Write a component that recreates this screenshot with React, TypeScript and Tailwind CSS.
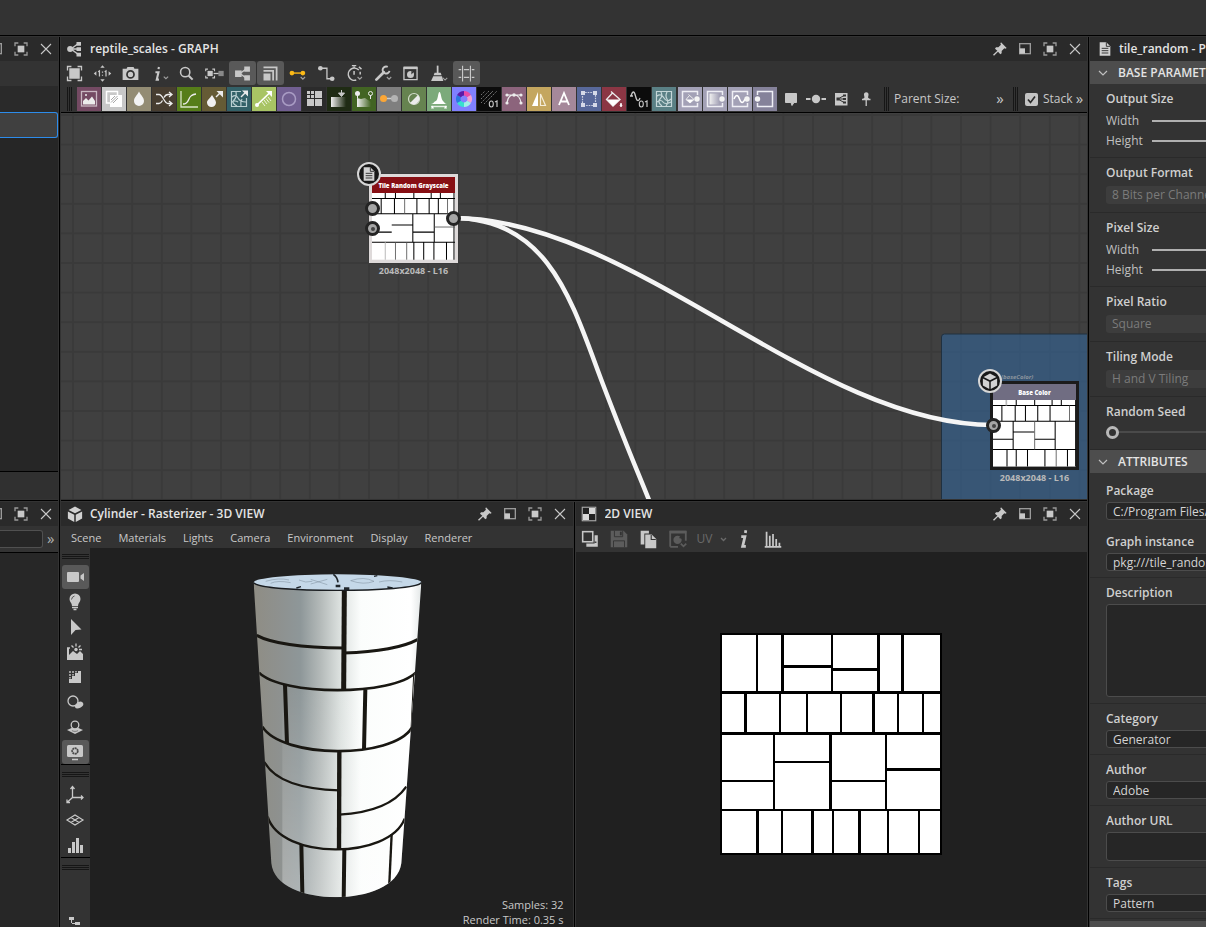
import React, { useId } from "react";

type Kids = { children?: React.ReactNode };

/* ---------- icon primitives ---------- */

function Ico({ children, size = 24 }: Kids & { size?: number }) {
  return (
    <svg width={size} height={size} viewBox="0 0 24 24" fill="none" stroke="#c8c8c8" strokeWidth="1.5" aria-hidden="true" className="shrink-0">
      {children}
    </svg>
  );
}
const S = "#c8c8c8";
const chev = <path d="M18 15.5l2.5 2.5 2.5-2.5" strokeWidth="1.3" stroke="#a0a0a0" />;

/* ---------- main toolbar icons ---------- */

const toolbar: { name: string; icon: React.ReactNode; on?: boolean }[] = [
  { name: "Fit view", icon: <><rect x="6" y="6" width="12" height="12" fill={S} stroke="none" /><path d="M4 8.500V4h4.500M15.500 4H20v4.500M20 15.500V20h-4.500M8.500 20H4v-4.500" /></> },
  { name: "Zoom 1:1", icon: <><path d="M9.500 5.500L12 2.500l2.500 3zM9.500 18.500l2.500 3 2.500-3zM5 9.500L2 12l3 2.500zM19 9.500l3 2.500-3 2.500z" fill={S} stroke="none" /><path d="M7 10l1.500-1v6.500M14.500 10L16 9v6.500" strokeWidth="1.400" /><path d="M11.300 10.500h1.400M11.300 14h1.400" strokeWidth="1.400" /></> },
  { name: "Screenshot", icon: <><path d="M3 6.500h4.500l1-2h7l1 2H21v13H3z" fill={S} stroke="none" /><circle cx="12" cy="13" r="4" fill={S} stroke="#333" strokeWidth="2" /></> },
  { name: "Info", icon: <><path d="M12.500 4.500L12 7M8.500 10.500h3.500l-2 8.500h2.500" strokeWidth="2.400" />{chev}</> },
  { name: "Search", icon: <><circle cx="10.500" cy="10.500" r="5.300" strokeWidth="1.800" /><path d="M14.500 14.500l4.500 4.500" strokeWidth="2.400" /></> },
  { name: "Node focus", icon: <><rect x="4" y="9" width="6" height="6" fill={S} stroke="none" /><path d="M2 9.500V7h2.500M9.500 7H12v2.500M12 14.500V17H9.500M4.500 17H2v-2.500" strokeWidth="1.300" /><path d="M11 12h6" /><rect x="16.500" y="9" width="6" height="6" fill="#888" stroke="none" /></> },
  { name: "Link view", on: true, icon: <><path d="M9 12l7-5M9 12l7 5" /><rect x="3.500" y="8.500" width="7.500" height="7.500" fill={S} stroke="none" /><rect x="14" y="4" width="6.500" height="6" fill={S} stroke="none" /><rect x="14" y="14" width="6.500" height="6" fill={S} stroke="none" /></> },
  { name: "Stacked view", on: true, icon: <><path d="M4 5h15v15" strokeWidth="2" /><path d="M4 9h11v11" strokeWidth="2" /><rect x="4" y="12" width="8" height="8" fill={S} stroke="none" /></> },
  { name: "Link colour", icon: <><path d="M4 11.500h13" stroke="#fbb917" strokeWidth="1.600" /><circle cx="4.500" cy="11.500" r="2.700" fill="#fbb917" stroke="none" /><circle cx="17" cy="11.500" r="2.700" fill="#fbb917" stroke="none" /><path d="M14.500 16l2.500 2.500 2.500-2.500" strokeWidth="1.300" stroke="#a0a0a0" /></> },
  { name: "Link shape", icon: <><path d="M5 6h7.500v12H19" strokeWidth="1.500" /><circle cx="5" cy="6" r="2.700" fill={S} stroke="none" /><circle cx="18.500" cy="18" r="2.700" fill={S} stroke="none" /></> },
  { name: "Timings", icon: <><path d="M17 8a7 7 0 1 0-3 11.500M9 3h5M11.500 4v2M11.500 9v4.500M17 4.500l3 2.500M18.500 10v3" strokeWidth="1.700" /><path d="M15.500 16l2.500 2.500 2.500-2.500" strokeWidth="1.300" stroke="#a0a0a0" /></> },
  { name: "Tools", icon: <><path d="M5 19l8.500-8.500" strokeWidth="3.200" strokeLinecap="round" /><path d="M18 4.500a4 4 0 1 0 2 4.500" strokeWidth="2.200" /><path d="M17 16l2.500 2.500L22 16" strokeWidth="1.300" stroke="#a0a0a0" /></> },
  { name: "Preview", icon: <><path d="M4.500 5.500h15v13.500h-15z" /><path d="M4 5.500h16" strokeWidth="3" /><circle cx="12" cy="13" r="4" fill={S} stroke="none" /><path d="M13 9l3 1-3 3z" fill="#333" stroke="none" /></> },
  { name: "Clean", icon: <><path d="M11 3v9" strokeWidth="2" /><path d="M7.500 11h7l1 3h-9zM6 15h10l1.500 5.500h-14z" fill={S} stroke="none" /><path d="M17 17l2.500 2.500L22 17" strokeWidth="1.300" stroke="#a0a0a0" /></> },
  { name: "Snap to grid", on: true, icon: <path d="M7.500 3v18M16.500 3v18M3 7.500h3M9 7.500h6M18 7.500h3M3 16.500h3M9 16.500h6M18 16.500h3" strokeWidth="1.300" /> },
];

/* ---------- atomic node tiles ---------- */

const W = "#ececec";
const io = (x: number) => <circle cx={x} cy="12" r="2.700" fill="#f4f4f4" stroke="none" />;

const tiles: { name: string; bg: string; icon: React.ReactNode }[] = [
  { name: "Bitmap", bg: "bg-[#744a63]", icon: <><rect x="4.500" y="4.500" width="15" height="14.500" stroke="#c9b7c2" strokeWidth="1.300" /><path d="M6 17.500V14l3-3 2.500 2.500L15 9.500l3 4.500v3.500z" fill={W} stroke="none" /><circle cx="9" cy="8" r="1" fill={W} stroke="none" /></> },
  { name: "Blend", bg: "bg-[#c8c8c8]", icon: <><path d="M8 16H4.500V4.500h11V8" stroke="#fff" /><rect x="8" y="8" width="12" height="12" fill="#fff" stroke="none" /><path d="M9 13l4-4M9 15.500l6.500-6.500M11 16l5-5" stroke="#a8a8a8" strokeWidth="1" /></> },
  { name: "Blur", bg: "bg-[#938c74]", icon: <path d="M12 4.500c2 4 5 6 5 9.500a5 5 0 0 1-10 0c0-3.500 3-5.500 5-9.500z" fill="#f3f3f3" stroke="none" /> },
  { name: "Channel shuffle", bg: "bg-[#473d30]", icon: <path d="M4 7.500h3c4 0 5 9 9 9h3M4 16.500h3c1.500 0 2.500-1 3.500-3M12 10.500c1-2 2.500-3 4-3h3M17 5l3 2.500-3 2.500M17 14l3 2.500-3 2.500" stroke={W} strokeWidth="1.300" /> },
  { name: "Curve", bg: "bg-[#567d19]", icon: <><path d="M4 4v16h17" stroke="#d8e2c6" strokeWidth="1.300" /><path d="M6 17c8 0 3-9 13-10" stroke={W} strokeWidth="1.400" /></> },
  { name: "Directional blur", bg: "bg-[#655b35]", icon: <><path d="M10 8c1.500 3 4 5 4 7.500a4.500 4.500 0 0 1-9 0C5 13 8.500 11 10 8z" fill="#f0f0f0" stroke="none" /><path d="M14 10l5-5" stroke={W} strokeWidth="1.500" /><path d="M14.500 4H21v6.500z" fill={W} stroke="none" /></> },
  { name: "Directional warp", bg: "bg-[#336168]", icon: <><path d="M14 4.500H4.500v15h15V11M5 10q4-3 6 1t8 4M9 5q1 5-2 8t3 6M14 19q-1-4 1-7M5 15q3-2 6 0" stroke="#b9ced1" strokeWidth="1.200" /><path d="M14 10l5-5" stroke={W} strokeWidth="1.500" /><path d="M15 3.500h6v6z" fill={W} stroke="none" /></> },
  { name: "Distance", bg: "bg-[#a8c464]", icon: <><path d="M5 18L18 5.500" stroke="#fff" strokeWidth="1.700" /><path d="M14 4h6v6z" fill="#fff" stroke="none" /><circle cx="5" cy="18" r="2" fill="#fff" stroke="none" /><path d="M10 15l3 4M12 13l3 4M14 11.500l3 4M16 10l3 4" stroke="#eef4dc" strokeWidth="1" /></> },
  { name: "Dot", bg: "bg-[#715f91]", icon: <circle cx="12" cy="12" r="6.500" stroke="#a99cc4" strokeWidth="1.500" /> },
  { name: "FX-Map", bg: "bg-[#2b2b2b]", icon: <g fill={S} stroke="none"><path d="M5 4h3v3H5zM9 4h3v3H9zM5 8h3v3H5zM9 8h3v3H9zM13 4h7v7h-7zM5 12h7v7H5zM13 12h7v7h-7z" /></g> },
  { name: "Gradient", bg: "bg-[#1f2b14]", icon: <><rect x="4" y="10" width="15" height="10" fill="url(#fadeLight)" stroke="none" /><path d="M14.500 3v4M11.500 6l3 3.500 3-3.500z" fill={S} stroke={S} strokeWidth="1" /></> },
  { name: "Dynamic gradient", bg: "bg-[#426423]", icon: <><path d="M5 20V11l4 1 4-1 6 4v5z" fill="url(#fadeLight)" stroke="none" /><circle cx="5.500" cy="6.500" r="2.500" fill={W} stroke="none" /><path d="M5.500 7v4M18.500 8v4" stroke={W} strokeWidth="1" /><circle cx="18.500" cy="6.500" r="2" stroke={W} strokeWidth="1" /></> },
  { name: "Grayscale conversion", bg: "bg-[#7f7f7f]", icon: <><path d="M7 11.500h10" stroke="#ccc" /><circle cx="6.500" cy="11.500" r="3.500" fill="#fba636" stroke="none" /><circle cx="17.500" cy="11.500" r="3.500" fill="#b4b4b4" stroke="none" /></> },
  { name: "HSL", bg: "bg-[#668350]", icon: <><circle cx="12" cy="12" r="5.500" stroke="#d3dccb" strokeWidth="1.200" /><path d="M16 8a5.700 5.700 0 0 1-8 8z" fill={W} stroke="none" /></> },
  { name: "Levels", bg: "bg-[#7caa7b]", icon: <><path d="M4 17c3 0 3-3 5-3 2-1 2-9 3.500-9S14 12 16 14s2 3 4 3z" fill="#fff" stroke="none" /><path d="M4 19.500h16" stroke="#e6f0e6" strokeWidth="1.400" /><path d="M5.500 18.500l-1.500 3h3zM18.500 18.500l-1.500 3h3z" fill="#fff" stroke="none" /></> },
  { name: "Normal", bg: "bg-[#8080ff]", icon: <g strokeWidth="4.500"><path d="M12 6.200A5.800 5.800 0 0 1 17 9.100" stroke="#e84aa8" /><path d="M17 9.100a5.800 5.800 0 0 1 0 5.800" stroke="#f2a2d4" /><path d="M17 14.900a5.800 5.800 0 0 1-5 2.900" stroke="#9ff0e6" /><path d="M12 17.800a5.800 5.800 0 0 1-5-2.900" stroke="#35e0cf" /><path d="M7 14.900a5.800 5.800 0 0 1 0-5.800" stroke="#2a78e0" /><path d="M7 9.100a5.800 5.800 0 0 1 5-2.900" stroke="#5a1aa8" /></g> },
  { name: "Pixel processor", bg: "bg-[#0c0c0c]", icon: <><path d="M4 8l4-4M4 12l8-8M4 16L16 4M7 17L20 4M9 11l7-7" stroke="#777" strokeWidth="1" strokeDasharray="1.500 1" /><ellipse cx="14.300" cy="17" rx="2" ry="3" strokeWidth="1.100" /><path d="M18 15l2-1v6" strokeWidth="1.200" /></> },
  { name: "Vector graphic", bg: "bg-[#8c647c]", icon: <><path d="M5 16q1-8 7-8t7 8M5 8h14" stroke={W} strokeWidth="1.200" /><g fill={W} stroke="none"><circle cx="5" cy="8" r="1.600" /><circle cx="12" cy="8" r="1.800" /><circle cx="19" cy="8" r="1.600" /><circle cx="5" cy="16" r="1.600" /><circle cx="19" cy="16" r="1.600" /></g></> },
  { name: "Mirror", bg: "bg-[#c4a65f]", icon: <><path d="M11 5v14H5z" fill="#fff" stroke="none" /><path d="M13.500 7v11.500h5z" stroke="#f4ecd8" strokeWidth="1.200" /></> },
  { name: "Text", bg: "bg-[#a5889a]", icon: <path d="M7 18L12 6l5 12M9 14.500h6" stroke="#fff" strokeWidth="1.800" /> },
  { name: "Transform 2D", bg: "bg-[#58689a]", icon: <><rect x="5.500" y="5.500" width="13" height="13" stroke="#cbd0e2" strokeWidth="1.200" strokeDasharray="1.600 1" /><path d="M4 4h4v4H4zM16 4h4v4h-4zM4 16h4v4H4zM16 16h4v4h-4z" fill="#d5d9e8" stroke="none" /></> },
  { name: "Uniform color", bg: "bg-[#8b3644]", icon: <><path d="M9 4.500l9 8-7 6.500-6.500-6.500 6-6.500" stroke={W} strokeWidth="1.300" /><path d="M5 12.500h13L11 19z" fill="#fff" stroke="none" /><path d="M19 16l1 3a1.300 1.300 0 0 1-2 0z" fill="#fff" stroke="#fff" strokeWidth=".8" /></> },
  { name: "Value processor", bg: "bg-[#0c0c0c]", icon: <><path d="M3 9h3M4 9q2.500-8 4.500 0t4.500 2" strokeWidth="1.300" /><ellipse cx="14.300" cy="17" rx="2" ry="3" strokeWidth="1.100" /><path d="M18 15l2-1v6" strokeWidth="1.200" /></> },
  { name: "Warp", bg: "bg-[#5a8085]", icon: <path d="M4.500 4.500h15v15h-15zM5 9q4-3 7 2t7 1M9 5q2 4-1 7t2 7M15 5q-2 4 0 7t-1 7M5 15q4-3 6 0t8 0" stroke="#c4d6d8" strokeWidth="1.200" /> },
];

const ioTiles: { name: string; bg: string; icon: React.ReactNode }[] = [
  { name: "Input color", bg: "bg-[#a3a1b6]", icon: <><path d="M19.500 8V4.500h-15v15h15V16" stroke="#efeff5" /><path d="M10.500 7.500l5.500 5-4 3.500-4-3.500 3.500-4" stroke={W} strokeWidth="1" /><path d="M8 12.500h8L12 16z" fill="#fff" stroke="none" />{io(19)}</> },
  { name: "Input grayscale", bg: "bg-[#a3a1b6]", icon: <><path d="M19.500 8V4.500h-15v15h15V16" stroke="#efeff5" /><rect x="6.500" y="6.500" width="10" height="11" fill="url(#fadeLight)" stroke="none" />{io(19)}</> },
  { name: "Input value", bg: "bg-[#a3a1b6]", icon: <><path d="M19.500 8V4.500h-15v15h15V16" stroke="#efeff5" /><path d="M6 12q3-7 5.500 0t5.500 0" stroke="#fff" />{io(19)}</> },
  { name: "Output", bg: "bg-[#85829a]", icon: <><path d="M4.500 8V4.500h15v15h-15V16" stroke="#efeff5" />{io(4.5)}</> },
];

const extras = [
  { name: "Comment", icon: <path d="M6.500 6.500h11v9H15l-2 3-1-3H6.500z" fill={S} stroke={S} strokeLinejoin="round" strokeWidth="1" /> },
  { name: "Dot node", icon: <><circle cx="12" cy="12" r="4.200" fill={S} stroke="none" /><path d="M2 12h4.500M17.500 12H22" strokeWidth="1.800" /></> },
  { name: "Frame", icon: <><rect x="6" y="6" width="12.500" height="12.500" fill={S} stroke="none" /><path d="M9 12l6-3.500M9 12h6M9 12l6 3.500" stroke="#333" strokeWidth="1" /><path d="M7.500 10.500h3v3h-3zM14 7.500h3V9.500h-3zM14 11h3v2h-3zM14 14.500h3v2h-3z" fill="#333" stroke="none" /></> },
  { name: "Pin", icon: <><path d="M10 8a2.300 2.300 0 1 1 4.500 0l-.5 2.500 2 2H8.500l2-2z" fill={S} stroke="none" /><path d="M8 12.500h8.500M12.200 12v7" strokeWidth="1.300" /></> },
];

function TileButton({ name, bg, icon }: { name: string; bg?: string; icon: React.ReactNode }) {
  return (
    <button type="button" aria-label={name} title={name} className={`flex h-6 w-6 shrink-0 items-center justify-center ${bg ?? ""}`}>
      <Ico>{icon}</Ico>
    </button>
  );
}

/* ---------- panel chrome ---------- */

const PinIcon = <Ico size={16}><path d="M13.500 2l8.500 8.500-2 1-1.500-.5-4 4v3.500l-2 1.500-3.500-4L3 22l-1.500-1.500L8 14.500 4.500 11.500 6 9.500h3.500l4-4L12.500 4z" fill={S} stroke="none" /></Ico>;
const DockIcon = <Ico size={16}><rect x="4" y="4" width="16" height="15" strokeWidth="2" stroke="#9a9a9a" /><rect x="4" y="11" width="8" height="8" fill={S} stroke="none" /></Ico>;
const MaxIcon = <Ico size={16}><rect x="7" y="7" width="10" height="10" fill={S} stroke="none" /><path d="M3 8V3h5M16 3h5v5M21 16v5h-5M8 21H3v-5" strokeWidth="2" stroke="#999" /></Ico>;
const CloseIcon = <Ico size={16}><path d="M4.500 4.500l15 15M19.500 4.500l-15 15" strokeWidth="1.600" /></Ico>;

function TitleBar({ title, icon, pin = true, dock = true }: { title?: string; icon?: React.ReactNode; pin?: boolean; dock?: boolean }) {
  const btn = "flex h-6 w-[25px] shrink-0 items-center justify-center";
  return (
    <header className="flex h-6 shrink-0 items-center justify-end overflow-hidden bg-[#2a2a2a]">
      {icon && <span className="mr-0.5 flex w-[27px] shrink-0 items-center justify-center">{icon}</span>}
      {title && <h2 className="flex-1 truncate text-[12px] font-semibold text-[#e4e4e4]">{title}</h2>}
      {pin && <button type="button" aria-label="Pin" className={btn}>{PinIcon}</button>}
      {dock && <button type="button" aria-label="Float" className={btn}>{DockIcon}</button>}
      <button type="button" aria-label="Maximize" className={btn}>{MaxIcon}</button>
      <button type="button" aria-label="Close" className={btn}>{CloseIcon}</button>
    </header>
  );
}

function Grip() {
  return (
    <span aria-hidden="true" className="flex h-6 w-[5px] shrink-0 justify-between">
      <i className="w-px bg-[#161616]" /><i className="w-px bg-[#161616]" /><i className="w-px bg-[#161616]" />
    </span>
  );
}
function HGrip() {
  return (
    <span aria-hidden="true" className="flex h-[17px] w-[27px] shrink-0 flex-col justify-center gap-px">
      <i className="h-px bg-[#161616]" /><i className="h-px bg-[#161616]" /><i className="h-px bg-[#161616]" />
    </span>
  );
}
const HDivider = () => <div className="flex h-[3px] shrink-0 flex-col justify-center bg-[#333]"><div className="h-px bg-black" /></div>;
const VDivider = () => <div className="flex w-[3px] shrink-0 justify-center bg-[#333]"><div className="w-px bg-black" /></div>;

/* ---------- drawings ---------- */

const GraphGlyph = <Ico size={18}><path d="M8 11l8-6M8 12h8M8 13l8 6" strokeWidth="2" /><circle cx="5.500" cy="12" r="4" fill={S} stroke="none" /><path d="M14 2.500h6v5h-6zM14 9.500h6v5h-6zM14 17h6v5h-6z" fill={S} stroke="none" /></Ico>;
const CubeGlyph = <Ico size={18}><path d="M12 2l8.500 4.500L12 11 3.500 6.500zM2.500 8.500l8.500 4.500v9.500L2.500 18zM21.500 8.500L13 13v9.500l8.500-4.500z" fill="#d2d2d2" stroke="none" /></Ico>;
const DocGlyph = <Ico size={16}><path d="M4 2h10l6 6v14H4z" fill="#d2d2d2" stroke="none" /><path d="M14 2v6h6M7 11h10M7 14.500h10M7 18h10" stroke="#222" strokeWidth="1.300" /></Ico>;
const CheckerGlyph = <Ico size={18}><rect x="3" y="3" width="18" height="18" stroke="#a8a8a8" /><path d="M4 4h8v8H4zM12 12h8v8h-8z" fill="#222" stroke="none" /><path d="M12 4h8v8h-8zM4 12h8v8H4z" fill="#d8d8d8" stroke="none" /></Ico>;

function NodeTexture({ variant }: { variant: "a" | "b" }) {
  return variant === "a" ? (
    <svg viewBox="68 117 244 196" className="block w-full" preserveAspectRatio="none" aria-hidden="true">
      <rect x="68" y="117" width="244" height="196" fill="#fff" />
      <path d="M68 133h244M68 178h244M68 262h244M107 117v16M137 117v16M191 117v16M242 117v16M269 117v16M95 133v45M134 133v45M200 133v45M236 133v45M263 133v45M188 178v84M251 178v84M126 211h62M68 232h58M188 232h63M191 262v51M220 262v51M250 262v51M287 262v51M309 117v196" stroke="#000" strokeWidth="3" />
      <path d="M164 133v45M290 133v45M251 217h61M137 262v51M170 262v51" stroke="#555" strokeWidth="2.500" />
      <path d="M107 262v51" stroke="#bbb" strokeWidth="3" />
    </svg>
  ) : (
    <svg viewBox="192 228 243 195" className="block w-full" preserveAspectRatio="none" aria-hidden="true">
      <rect x="192" y="228" width="243" height="195" fill="#fff" />
      <path d="M192 244h243M192 290h243M192 373h243M260 228v16M314 228v16M365 228v16M392 228v16M218 244v46M257 244v46M287 244v46M323 244v46M359 244v46M251 290v83M374 290v83M192 343h59M251 322h62M314 343h60M233 373v50M260 373v50M293 373v50M344 373v50M410 373v50M434 228v195" stroke="#000" strokeWidth="3" />
      <path d="M416 244v46M314 290v83M377 373v50" stroke="#555" strokeWidth="2.500" />
      <path d="M231 228v16" stroke="#bbb" strokeWidth="5" />
    </svg>
  );
}

function BrickMap() {
  return (
    <svg width="222" height="222" viewBox="30 24 666 666" role="img" aria-label="Tile pattern" shapeRendering="crispEdges">
      <rect x="30" y="24" width="666" height="666" fill="#000" />
      <g fill="#fff">
        <path d="M36 30h102v168H36zM144 30h69v168h-69zM222 30h141v90H222zM222 129h141v69H222zM369 30h132v99H369zM369 138h132v60H369zM510 30h63v168h-63zM582 30h108v168H582z" />
        <path d="M36 207h66v114H36zM111 207h96v114h-96zM213 207h75v114h-75zM294 207h96v114h-96zM396 207h90v114h-90zM495 207h66v114h-66zM567 207h69v114h-69zM642 207h48v114h-48z" />
        <path d="M36 330h153v135H36zM36 471h153v81H36zM195 330h162v78H195zM195 414h162v138H195zM366 330h159v135H366zM366 471h159v81H366zM531 330h159v99H531zM531 438h159v114H531z" />
        <path d="M36 558h102v126H36zM147 558h66v126h-66zM219 558h84v126h-84zM312 558h54v126h-54zM372 558h72v126h-72zM453 558h78v126h-78zM537 558h87v126h-87zM630 558h60v126h-60z" />
      </g>
    </svg>
  );
}

function Cylinder() {
  return (
    <svg width="200" height="350" viewBox="0 0 600 1050" role="img" aria-label="Tiled cylinder" className="shrink-0">
      <defs>
        <linearGradient id="shade" x1="44" x2="546" y1="0" y2="0" gradientUnits="userSpaceOnUse">
          <stop offset="0" stopColor="#8f8d84" /><stop offset=".15" stopColor="#8e918f" /><stop offset=".28" stopColor="#8e9799" />
          <stop offset=".4" stopColor="#b4bab9" /><stop offset=".52" stopColor="#dde2e0" /><stop offset=".64" stopColor="#fbfdfc" /><stop offset=".94" stopColor="#fff" /><stop offset="1" stopColor="#e4e8e8" />
        </linearGradient>
        <linearGradient id="lower" x1="0" x2="0" y1="90" y2="1010" gradientUnits="userSpaceOnUse">
          <stop offset=".3" stopColor="#fff" stopOpacity="0" /><stop offset="1" stopColor="#fff" stopOpacity=".28" />
        </linearGradient>
        <clipPath id="body"><path d="M44 68C90 98 500 98 547 68L487 910C470 1046 110 1046 97 910z" /></clipPath>
      </defs>
      <g clipPath="url(#body)">
        <rect x="40" y="40" width="510" height="990" fill="url(#shade)" />
        <rect x="130" y="40" width="420" height="990" fill="url(#lower)" />
        <g stroke="#191712" fill="none" strokeWidth="8">
          <path d="M53 226Q120 262 314 264M314 279Q470 274 537 238" strokeWidth="9" />
          <path d="M60 338C130 408 460 408 530 338" />
          <path d="M70 500C130 597 460 597 518 504" />
          <path d="M76 606Q120 686 300 691M300 764Q450 756 502 680" strokeWidth="7" />
          <path d="M86 770C125 900 450 900 497 776" strokeWidth="7" />
          <path d="M316 90L314 390" strokeWidth="15" />
          <path d="M138 374L144 552M379 388L375 570" strokeWidth="12" />
          <path d="M301 574L300 868" strokeWidth="13" />
          <path d="M187 852L190 1000M316 868L314 1020" strokeWidth="12" />
          <path d="M458 822L451 970" strokeWidth="7" />
          <path d="M524 345L516 510" strokeWidth="3" />
        </g>
      </g>
      <ellipse cx="295.500" cy="67" rx="251.500" ry="24" fill="#c5d8e8" />
      <path d="M44 68C60 99 530 99 547 68" fill="none" stroke="#1a1d20" strokeWidth="4" />
      <g stroke="#20262b" fill="none">
        <path d="M283 43q12 8 14 24" strokeWidth="5" /><path d="M290 78h14M315 86h16" strokeWidth="8" />
        <path d="M172 84l14-4M405 49l10-2M445 81l16 3" strokeWidth="4" />
        <path d="M80 64q40-12 70-4M95 70q20-10 60-2M215 58l50 16M265 58l-50 14M335 62q40-14 70 2q-30 12-70-2M420 66q30-8 70 0M180 60q20 10 40 4" strokeWidth="1.500" stroke="#7b8b98" />
      </g>
    </svg>
  );
}

/* ---------- graph panel ---------- */

function Port({ hollow = false, className }: { hollow?: boolean; className: string }) {
  return (
    <span className={`absolute flex h-[15px] w-[15px] items-center justify-center rounded-full border-[3px] border-[#242424] bg-[#a6a6a6] ${className}`}>
      {hollow && <i className="h-1 w-1 rounded-full bg-[#444]" />}
    </span>
  );
}

function GraphNode({ title, variant, className, frame, head, children, badge }: Kids & { title: string; variant: "a" | "b"; className: string; frame: string; head: string; badge: React.ReactNode }) {
  return (
    <article className={`absolute w-[89px] ${className}`}>
      <div className={`p-[3px] ${frame}`}>
        <h3 className={`flex h-4 items-center justify-center pt-0.5 text-[6px] font-extrabold whitespace-nowrap text-white ${head}`}>{title}</h3>
        <NodeTexture variant={variant} />
      </div>
      <p className="text-center text-[9px] leading-[15px] font-bold whitespace-nowrap text-[#b9b9b9]">2048x2048 - L16</p>
      <span className="absolute -top-3 -left-3 flex h-6 w-6 items-center justify-center rounded-full border-2 border-[#d6d6d6] bg-[#181818]">{badge}</span>
      {children}
    </article>
  );
}

function GraphCanvas() {
  return (
    <div className="relative min-h-0 flex-1 overflow-hidden bg-[#404040]">
      <svg className="absolute inset-0 h-full w-full" aria-hidden="true">
        <defs>
          <pattern id="grid" x="11" y="1" width="29.600" height="29.600" patternUnits="userSpaceOnUse">
            <path d="M1 0v29.600M0 1h29.600" stroke="#3a3a3a" strokeWidth="2" />
          </pattern>
          <linearGradient id="fadeLight"><stop offset="0" stopColor="#f0f0f0" /><stop offset="1" stopColor="#f0f0f0" stopOpacity="0" /></linearGradient>
        </defs>
        <rect width="100%" height="100%" fill="url(#grid)" />
        <rect x="880.500" y="221" width="160" height="180" rx="3" fill="#33659a" fillOpacity=".6" stroke="#20303f" />
        <g fill="none" stroke="#f5f5f5" strokeWidth="4.500">
          <path d="M392 105C572 105 752 312 932 312" />
          <path d="M392 105C490 105 512 193 543 274S573 349 590 392" />
        </g>
      </svg>
      <GraphNode title="Tile Random Grayscale" variant="a" className="top-[61px] left-[308px]" frame="bg-[#dedada]" head="bg-[#870f14]" badge={DocGlyph}>
        <Port className="top-[27px] -left-1" />
        <Port hollow className="top-[47px] -left-1" />
        <Port className="top-[37px] left-[77px]" />
      </GraphNode>
      <p className="absolute top-[260px] left-[940px] text-[6px] leading-[9px] font-bold text-[#8b949d] italic">(baseColor)</p>
      <GraphNode title="Base Color" variant="b" className="top-[268px] left-[929px]" frame="bg-[#1b1b1b]" head="bg-[#706d82]" badge={CubeGlyph}>
        <Port hollow className="top-[37px] -left-1" />
      </GraphNode>
    </div>
  );
}

function GraphPanel() {
  const stack = useId();
  return (
    <section className="flex min-h-0 flex-[462] flex-col bg-[#333]">
      <TitleBar title="reptile_scales - GRAPH" icon={GraphGlyph} />
      <div className="flex h-6 shrink-0 items-center gap-px">
        {toolbar.map((t) => (
          <button key={t.name} type="button" aria-label={t.name} title={t.name} className={`flex h-6 w-[27px] shrink-0 items-center justify-center rounded-[3px] ${t.on ? "bg-[#595959]" : ""}`}>
            <Ico size={21}>{t.icon}</Ico>
          </button>
        ))}
      </div>
      <div className="flex h-7 shrink-0 items-end overflow-hidden border-b border-black pb-px pl-1.5 text-[12px] text-[#c8c8c8]">
        <Grip />
        <div className="flex gap-px pl-[5px]">{tiles.map((t) => <TileButton key={t.name} {...t} />)}</div>
        <div className="flex gap-px pl-0.5">{ioTiles.map((t) => <TileButton key={t.name} {...t} />)}</div>
        <div className="flex gap-px pr-1.5 pl-0.5">{extras.map((t) => <TileButton key={t.name} {...t} />)}</div>
        <Grip />
        <span className="flex-1 pl-[5px] leading-6 whitespace-nowrap">Parent Size:</span>
        <button type="button" aria-label="More parent size options" className="h-6 w-[18px] pb-0.5 text-[15px] leading-none">»</button>
        <span className="w-1" />
        <Grip />
        <label htmlFor={stack} className="flex h-6 items-center gap-[5px] pl-[7px]">
          <span className="grid h-[13px] w-[13px]">
            <input id={stack} type="checkbox" defaultChecked className="col-start-1 row-start-1 h-[13px] w-[13px] appearance-none rounded-[2px] bg-[#c4c4c4]" />
            <svg viewBox="0 0 13 13" className="pointer-events-none col-start-1 row-start-1" aria-hidden="true"><path d="M3 6.500l2.500 3L10 3.500" fill="none" stroke="#2a2a2a" strokeWidth="1.700" /></svg>
          </span>
          <span className="w-[29px]">Stack</span>
        </label>
        <button type="button" aria-label="More stack options" className="h-6 w-[15px] pb-0.5 text-[15px] leading-none">»</button>
      </div>
      <GraphCanvas />
    </section>
  );
}

/* ---------- 3D view ---------- */

const viewTools: { name: string; icon: React.ReactNode; on?: boolean }[] = [
  { name: "Camera", on: true, icon: <path d="M4 8q0-1 1-1h10q1 0 1 1v8q0 1-1 1H5q-1 0-1-1zM17.500 10.500L21 8v8l-3.500-2.500z" fill={S} stroke="none" /> },
  { name: "Light", icon: <><path d="M12 3.500a5.500 5.500 0 0 1 5.500 5.500c0 3-2.500 4-2.500 7H9c0-3-2.500-4-2.500-7A5.500 5.500 0 0 1 12 3.500z" fill={S} stroke="none" /><path d="M9 17.500h6M10.500 19.500h3" strokeWidth="1.300" /><path d="M8.500 9.500Q9 6.500 11.500 6" stroke="#555" strokeWidth="1" /></> },
  { name: "Select", icon: <path d="M8 4l10.500 10.500-6 .5L8 20z" fill={S} stroke="none" /> },
  { name: "Environment", icon: <><path d="M4 8v12h16v-6l-3-3-3 3-4-3-4 4V8z" fill={S} stroke="none" /><path d="M13 3.500v3M8.500 5.500l2 2M17.500 5.500l-2 2M19 9.500h-3" strokeWidth="1.300" /><circle cx="13" cy="9.500" r="1.700" fill={S} stroke="none" /><path d="M4 8h3" /></> },
  { name: "Shading", icon: <><path d="M6 18v-4h3v-3h3V8h3V6h3v12z" fill={S} stroke="none" /><path d="M6 6h2v2H6zM9 6h2v2H9zM12 6h2v1.500h-2zM6 9h2v2H6zM9 9h2v1.500H9zM6 12h2v1.500H6z" fill="#9a9a9a" stroke="none" /></> },
  { name: "Shadows", icon: <><ellipse cx="16" cy="15" rx="4.500" ry="3" fill={S} stroke="none" transform="rotate(-25 16 15)" /><circle cx="10" cy="11" r="5" fill="#333" strokeWidth="1.300" /></> },
  { name: "Ground plane", icon: <><path d="M4 15l8-3.500 8 3.500-8 4z" fill={S} stroke="none" /><circle cx="12" cy="10" r="3.800" fill="#333" strokeWidth="1.300" /><path d="M9 15.500q3 2 6 0" stroke="#888" /></> },
  { name: "Display settings", on: true, icon: <><rect x="4" y="5" width="16" height="12" rx="1.500" fill={S} stroke="none" /><circle cx="12" cy="11" r="2.800" stroke="#4a4a4a" strokeWidth="1.800" strokeDasharray="2 .5" /><path d="M9 19.500h6" strokeWidth="1.500" /></> },
];
const gizmoTools = [
  { name: "Axes", icon: <path d="M9.500 4v10.500H20M9.500 14.500L4 19.500M7.500 6l2-2.500 2 2.500M18 12.500l2 2-2 2M4 16.500v3h3" strokeWidth="1.300" /> },
  { name: "Grid", icon: <path d="M4 12l8-5 8 5-8 5zM8 9.500l8 5M16 9.500l-8 5" strokeWidth="1.200" /> },
  { name: "Statistics", icon: <path d="M5 20v-5h3v5zM9 20V9h3v11zM13 20V5h3v15zM17 20v-8h3v8z" fill={S} stroke="none" /> },
];

function SideButton({ name, icon, on }: { name: string; icon: React.ReactNode; on?: boolean }) {
  return (
    <button type="button" aria-label={name} title={name} className={`flex h-6 w-[27px] shrink-0 items-center pl-px ${on ? "rounded-[3px] bg-[#595959]" : ""}`}>
      <Ico size={24}>{icon}</Ico>
    </button>
  );
}

function View3D() {
  return (
    <section className="flex min-h-0 min-w-0 flex-1 flex-col bg-[#333]">
      <TitleBar title="Cylinder - Rasterizer - 3D VIEW" icon={CubeGlyph} />
      <nav className="flex h-[22px] shrink-0 items-center gap-[17px] pt-0.5 pl-2.5 text-[11px] text-[#c8c8c8]">
        {["Scene", "Materials", "Lights", "Camera", "Environment", "Display", "Renderer"].map((m) => (
          <button key={m} type="button">{m}</button>
        ))}
      </nav>
      <div className="flex min-h-0 flex-1">
        <div className="flex w-[29px] shrink-0 flex-col overflow-hidden">
          <div className="flex flex-col items-center border-b border-black">
            <HGrip />
            <div className="flex flex-col gap-px">{viewTools.map((t) => <SideButton key={t.name} {...t} />)}</div>
          </div>
          <div className="flex flex-col items-center border-b border-black pt-px">
            <HGrip />
            <div className="flex flex-col gap-px">{gizmoTools.map((t) => <SideButton key={t.name} {...t} />)}</div>
          </div>
          <div className="flex flex-col items-center gap-9 pt-px">
            <HGrip />
            <SideButton name="Hierarchy" icon={<path d="M6 5h5v3H6zM12 10h5v3h-5zM12 15h5v3h-5zM8 8h1v9h3v-1H9v-4h3v-1H8z" fill={S} stroke="none" />} />
          </div>
        </div>
        <div className="relative flex flex-1 items-center justify-center overflow-hidden bg-[#202020] pb-1.5 pl-4">
          <Cylinder />
          <p className="absolute right-[9px] bottom-0 text-right text-[11px] leading-[15px] text-[#c8c8c8]">Samples: 32<br />Render Time: 0.35 s</p>
        </div>
      </div>
    </section>
  );
}

/* ---------- 2D view ---------- */

function View2D() {
  const b = "flex h-6 w-6 items-center justify-center";
  return (
    <section className="flex min-h-0 min-w-0 flex-1 flex-col bg-[#333]">
      <TitleBar title="2D VIEW" icon={CheckerGlyph} />
      <div className="flex h-[26px] shrink-0 items-center gap-[5px] pl-0.5 text-[12px] text-[#6a6a6a]">
        <button type="button" aria-label="Background" className={b}><Ico size={22}><rect x="4" y="4" width="11" height="11" strokeWidth="1.700" /><path d="M17 8h3.500v12.500H8V17h9z" fill={S} stroke="none" /><path d="M17 15.500h2" stroke="#333" /></Ico></button>
        <button type="button" aria-label="Save" className={b}><Ico size={22}><path d="M3 3h14l4 4v14H3z" fill="#5c5c5c" stroke="none" /><path d="M7 3v6.500h9V3M6 21v-7h12v7" stroke="#333" strokeWidth="1" /><path d="M13 4h2v4h-2z" fill="#333" stroke="none" /></Ico></button>
        <button type="button" aria-label="Copy" className={b}><Ico size={22}><path d="M4 3h9v3H8v12H4z" fill={S} stroke="none" /><path d="M9 7h7l5 5v10H9z" fill={S} stroke="none" /><path d="M15.500 7.500v5h5" stroke="#333" strokeWidth="1.200" /></Ico></button>
        <button type="button" aria-label="Preview channel" className={`${b} ml-px`}><Ico size={22}><path d="M3.500 20.500V4h17v10M3.500 20.500H12" stroke="#5c5c5c" strokeWidth="2" /><path d="M3 4.500h18" stroke="#5c5c5c" strokeWidth="3" /><circle cx="11.500" cy="13" r="4.500" fill="#5c5c5c" stroke="none" /><path d="M13 11l3-3 1 4z" fill="#333" stroke="none" /><path d="M15 17l3 3 3-3" stroke="#5c5c5c" strokeWidth="1.800" /></Ico></button>
        <button type="button" className="flex items-center gap-2 pl-0.5">UV<svg width="7" height="5" viewBox="0 0 7 5" aria-hidden="true"><path d="M1 1l2.500 2.500L6 1" fill="none" stroke="#6a6a6a" strokeWidth="1.300" /></svg></button>
        <button type="button" aria-label="Info" className={b}><Ico size={22}><path d="M14 2.500L13.500 5.500M9 9.500h4l-2.500 10.500h3.500" strokeWidth="3" /></Ico></button>
        <button type="button" aria-label="Histogram" className={b}><Ico size={22}><path d="M3 20.500h18M5 20V4M8.500 20V8.500M12 20V6.500M15.500 20v-8M19 20v-4" strokeWidth="1.900" /></Ico></button>
      </div>
      <div className="flex min-h-0 flex-1 items-center justify-center overflow-hidden bg-[#202020] pt-2">
        <BrickMap />
      </div>
    </section>
  );
}

/* ---------- left column ---------- */

function LeftColumn() {
  return (
    <aside className="flex w-[58px] shrink-0 flex-col bg-[#333]">
      <section className="flex min-h-0 flex-[462] flex-col">
        <TitleBar pin={false} />
        <div className="h-[25px] shrink-0" />
        <div className="h-[26px] shrink-0 bg-[#2a2a2a]" />
        <button type="button" aria-label="Selected package" className="h-[26px] shrink-0 rounded-r-[3px] border border-l-0 border-[#2d8ceb] bg-[#404040]" />
        <div className="min-h-0 flex-1 bg-[#262626]" />
        <div className="h-7 shrink-0 border-t border-black bg-[#303030]" />
      </section>
      <HDivider />
      <section className="flex min-h-0 flex-[425] flex-col">
        <TitleBar pin={false} />
        <div className="flex h-[27px] shrink-0 items-center gap-1 border-b border-black">
          <input aria-label="Search library" className="h-[18px] w-[43px] rounded-r-[3px] border border-l-0 border-[#505050] bg-[#262626]" />
          <button type="button" aria-label="More" className="pb-0.5 text-[15px] leading-none text-[#b0b0b0]">»</button>
        </div>
        <div className="min-h-0 flex-1 bg-[#272727]" />
      </section>
    </aside>
  );
}

/* ---------- properties ---------- */

function GroupHeader({ children }: Kids) {
  return (
    <button type="button" className="flex h-[23px] w-full shrink-0 items-center gap-2.5 bg-[#4d4d4d] pl-2 text-[12px] font-semibold whitespace-nowrap text-[#e4e4e4]">
      <svg width="10" height="6" viewBox="0 0 10 6" aria-hidden="true"><path d="M1 1l4 4 4-4" fill="none" stroke="#c0c0c0" strokeWidth="1.200" /></svg>
      {children}
    </button>
  );
}

const labelCls = "block h-4 text-[12px] leading-4 font-semibold whitespace-nowrap text-[#cfcfcf]";

function SizeGroup({ label }: { label: string }) {
  return (
    <fieldset className="border-b border-[#2a2a2a] pt-[7px] pb-1.5 pl-4">
      <legend className="contents"><span className={labelCls}>{label}</span></legend>
      <div className="pt-1">
        {["Width", "Height"].map((n) => (
          <label key={n} className="flex h-5 items-center text-[12px] text-[#c0c0c0]">
            <span className="w-[46px] shrink-0">{n}</span>
            <input type="range" defaultValue={100} className="h-0.5 w-[200px] shrink-0 appearance-none bg-[#b0b0b0]" />
          </label>
        ))}
      </div>
    </fieldset>
  );
}

function SelectGroup({ label, value }: { label: string; value: string }) {
  const id = useId();
  return (
    <div className="border-b border-[#2a2a2a] pt-[7px] pb-2 pl-4">
      <label htmlFor={id} className={labelCls}>{label}</label>
      <select id={id} disabled className="mt-[5px] block h-[18px] w-[230px] appearance-none rounded-[3px] bg-[#3d3d3d] pl-1.5 text-[12px] leading-4 text-[#7b7b7b]">
        <option>{value}</option>
      </select>
    </div>
  );
}

function TextGroup({ label, value = "", size = "h-[18px]", last = true }: { label: string; value?: string; size?: string; last?: boolean }) {
  const id = useId();
  const box = `mt-[3px] block w-[230px] resize-none rounded-[3px] border border-[#4c4c4c] bg-[#262626] pl-1.5 text-[12px] leading-4 text-[#d4d4d4] ${size}`;
  return (
    <div className={`border-b pt-[7px] pb-1.5 pl-4 ${last ? "border-[#2a2a2a]" : "border-transparent"}`}>
      <label htmlFor={id} className={labelCls}>{label}</label>
      {value ? <input id={id} defaultValue={value} className={box} /> : <textarea id={id} className={box} />}
    </div>
  );
}

function Properties() {
  const seed = useId();
  return (
    <aside className="w-[116px] shrink-0 overflow-hidden bg-[#333]">
      <div className="w-[260px]">
        <header className="flex h-6 items-center bg-[#2a2a2a]">
          <span className="flex w-[29px] justify-center">{DocGlyph}</span>
          <h2 className="text-[12px] font-semibold whitespace-nowrap text-[#e4e4e4]">tile_random - PROPERTIES</h2>
        </header>
        <GroupHeader>BASE PARAMETERS</GroupHeader>
        <SizeGroup label="Output Size" />
        <SelectGroup label="Output Format" value="8 Bits per Channel" />
        <SizeGroup label="Pixel Size" />
        <SelectGroup label="Pixel Ratio" value="Square" />
        <SelectGroup label="Tiling Mode" value="H and V Tiling" />
        <div className="border-b border-[#2a2a2a] pt-[7px] pb-2 pl-4">
          <label htmlFor={seed} className={labelCls}>Random Seed</label>
          <div className="flex h-[21px] items-center pt-[3px]">
            <input id={seed} type="range" defaultValue={0} className="h-0.5 w-[230px] appearance-none bg-[#4a4a4a] [&::-webkit-slider-thumb]:h-[13px] [&::-webkit-slider-thumb]:w-[13px] [&::-webkit-slider-thumb]:appearance-none [&::-webkit-slider-thumb]:rounded-full [&::-webkit-slider-thumb]:border-[3px] [&::-webkit-slider-thumb]:border-[#b8b8b8] [&::-webkit-slider-thumb]:bg-[#333]" />
          </div>
        </div>
        <GroupHeader>ATTRIBUTES</GroupHeader>
        <div className="pt-[3px]">
          <TextGroup label="Package" value="C:/Program Files/Adobe/" last={false} />
          <TextGroup label="Graph instance" value="pkg:///tile_random" />
          <TextGroup label="Description" size="h-[93px]" />
          <TextGroup label="Category" value="Generator" />
          <TextGroup label="Author" value="Adobe" />
          <TextGroup label="Author URL" size="h-[29px]" />
          <TextGroup label="Tags" value="Pattern" />
        </div>
        <div className="mt-0.5 h-6 bg-[#4d4d4d]" />
      </div>
    </aside>
  );
}

export default function App() {
  return (
    <div className="flex h-screen flex-col overflow-hidden bg-[#333] font-['Open_Sans','Noto_Sans',sans-serif] select-none">
      <div className="h-9 shrink-0 border-b border-black bg-[#333]" />
      <main className="flex min-h-0 flex-1 pt-px">
        <LeftColumn />
        <VDivider />
        <div className="flex min-w-0 flex-1 flex-col">
          <GraphPanel />
          <HDivider />
          <div className="flex min-h-0 flex-[425]">
            <View3D />
            <VDivider />
            <View2D />
          </div>
        </div>
        <VDivider />
        <Properties />
      </main>
    </div>
  );
}
